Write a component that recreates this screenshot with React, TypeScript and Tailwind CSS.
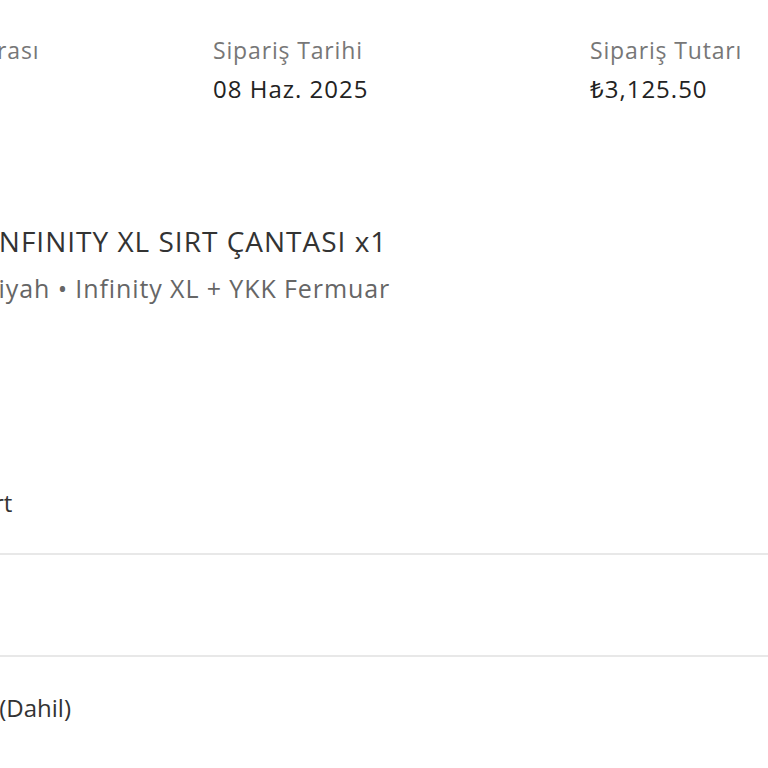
export default function App() {
  const font = { fontFamily: '"Open Sans", "Noto Sans", sans-serif' }
  return (
    <div className="w-[768px] h-[768px] overflow-hidden bg-white" style={font}>
      <div className="ml-[-156px] w-[1100px]">
        {/* Order summary */}
        <div className="flex pt-[31px]">
          <div className="w-[369px]">
            <div className="text-[23px] leading-[38px] tracking-[0.85px] text-[#777]">Sipariş Numarası</div>
            <div className="text-[24px] leading-[40px] tracking-[1px] text-[#222]">#10245</div>
          </div>
          <div className="w-[377px]">
            <div className="text-[23px] leading-[38px] tracking-[0.85px] text-[#777]">Sipariş Tarihi</div>
            <div className="text-[24px] leading-[40px] tracking-[1px] text-[#222]">08 Haz. 2025</div>
          </div>
          <div className="w-[300px]">
            <div className="text-[23px] leading-[38px] tracking-[0.85px] text-[#777]">Sipariş Tutarı</div>
            <div className="text-[24px] leading-[40px] tracking-[1px] text-[#222]">₺3,125.50</div>
          </div>
        </div>

        {/* Product */}
        <div className="pt-[110px]">
          <div className="pl-[146px] text-[28px] leading-[44px] tracking-[1px] text-[#333]">INFINITY XL SIRT ÇANTASI x1</div>
          <div className="pl-[140px] pt-[3px] text-[25px] leading-[44px] tracking-[0.9px] text-[#666]">Siyah • Infinity XL + YKK Fermuar</div>
        </div>

        {/* Details */}
        <div className="pl-[57px] pt-[173px] pb-[30px] text-[24px] leading-[40px] text-[#333]">Kredi Kart</div>
        <div className="border-t-2 border-[#e8e8e8] h-[102px]" />
        <div className="border-t-2 border-[#e8e8e8] pt-[31px]">
          <div className="w-[227px] text-right whitespace-nowrap text-[24px] leading-[40px] text-[#333]">Kargo Ücreti (Dahil)</div>
        </div>
      </div>
    </div>
  )
}
